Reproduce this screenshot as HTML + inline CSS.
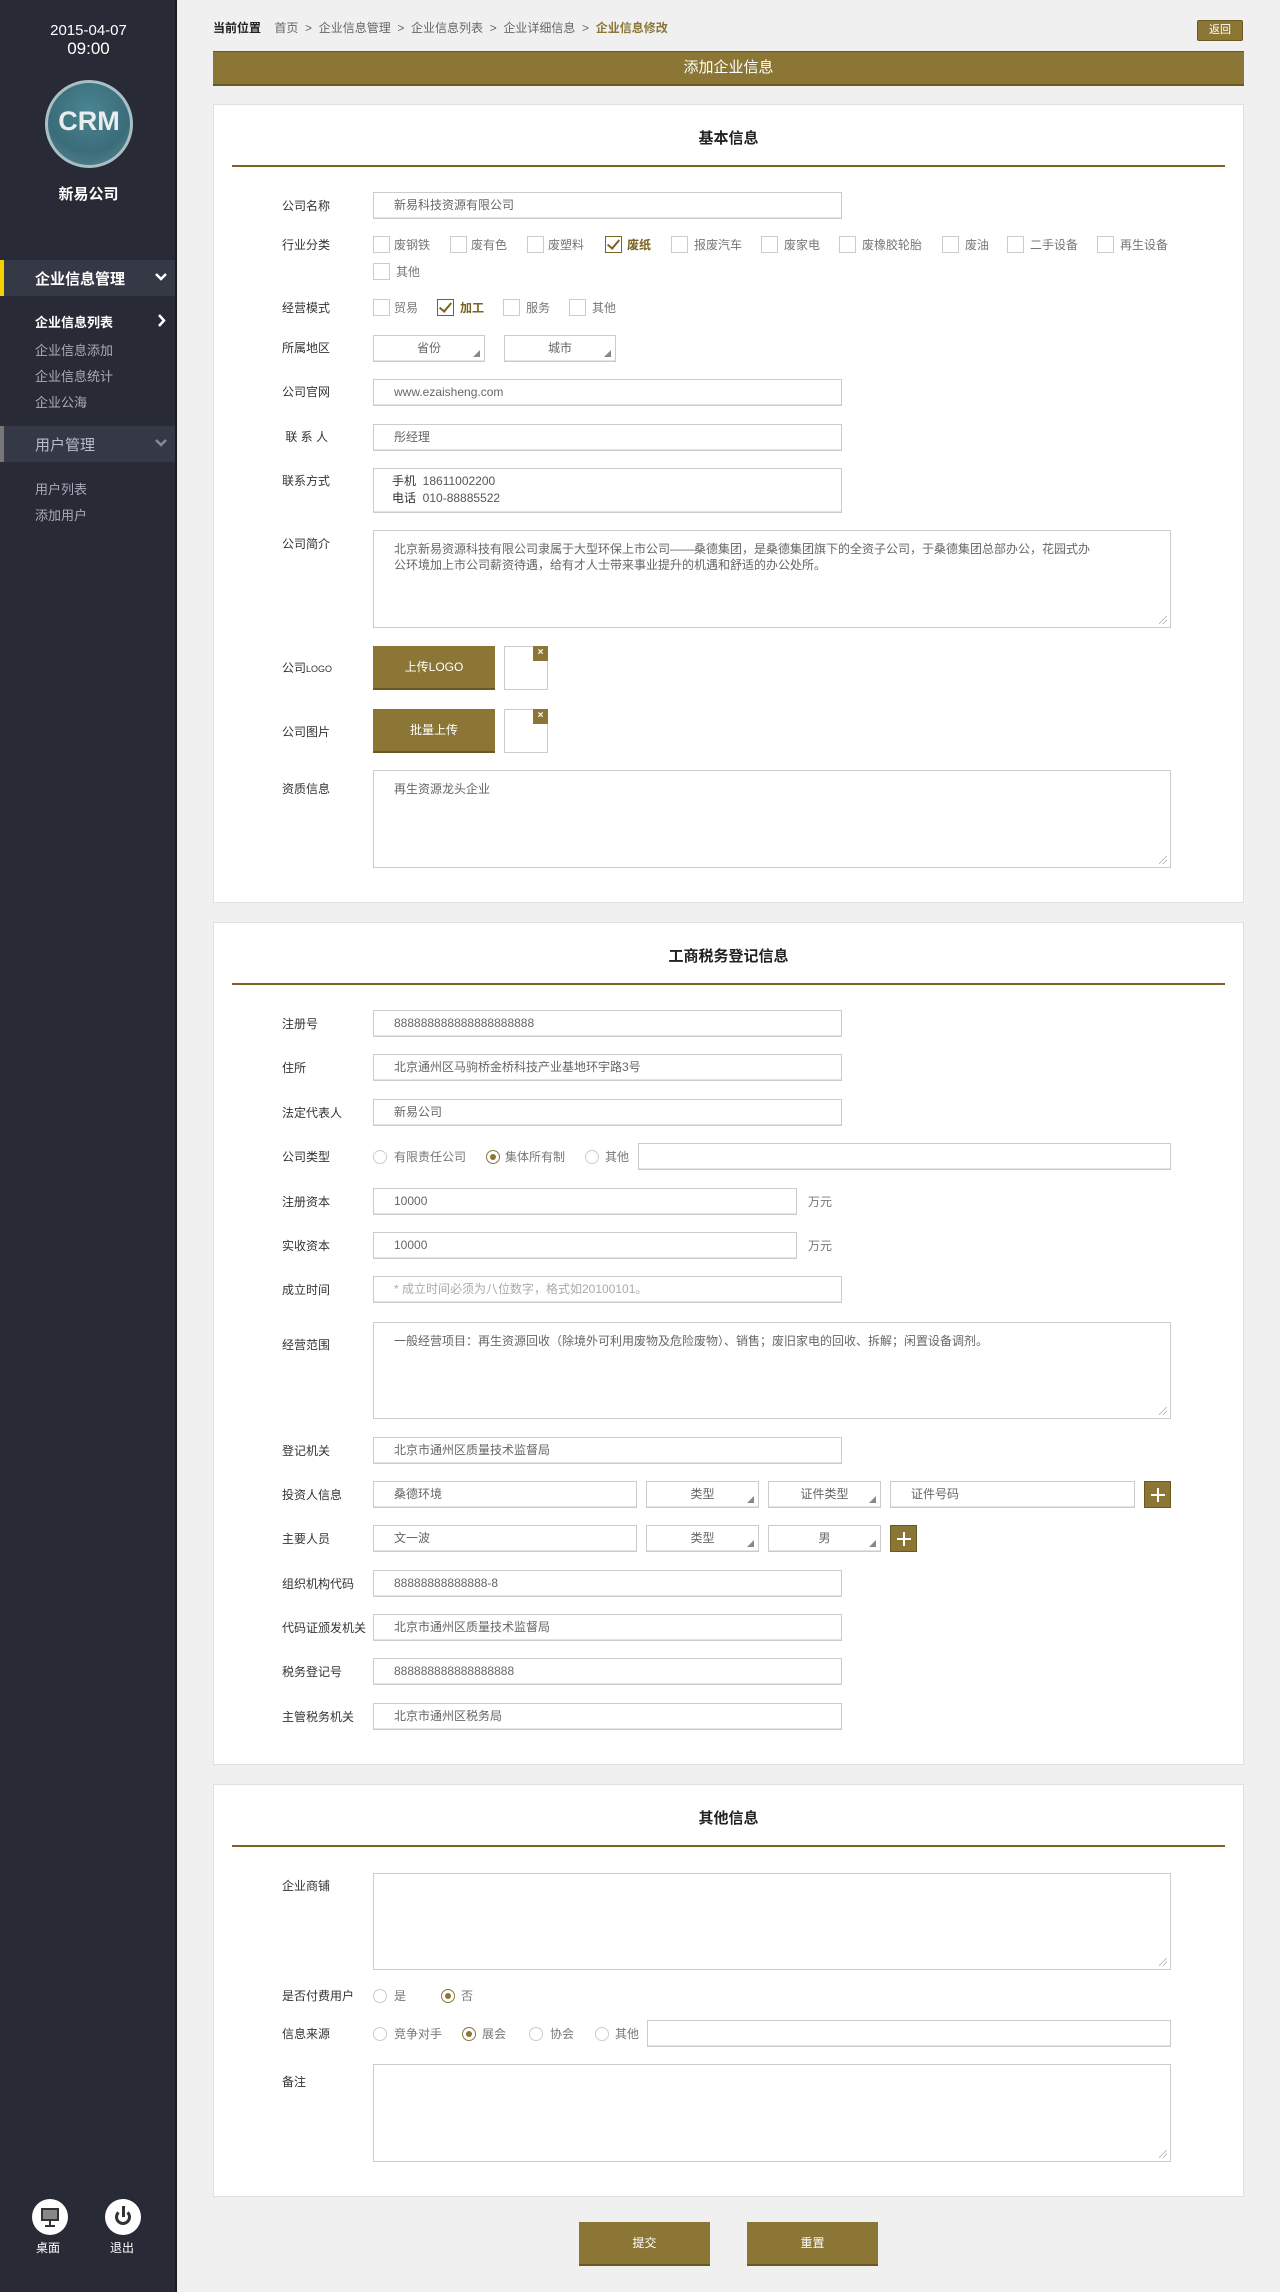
<!DOCTYPE html>
<html><head><meta charset="utf-8"><style>
*{margin:0;padding:0;box-sizing:border-box}
body{width:1280px;height:2292px;background:#f0f0f0;position:relative;font-family:"Liberation Sans","Noto Sans CJK SC",sans-serif;font-size:13px;color:#333;overflow:hidden}
.a{position:absolute;white-space:nowrap}
#sb{position:absolute;left:0;top:0;width:177px;height:2292px;background:#282a35;border-right:2px solid #1c1d24}
.card{position:absolute;left:213px;width:1031px;background:#fff;border:1px solid #e0e0e0}
.hd{position:absolute;left:0;width:100%;text-align:center;font-size:15px;color:#222;font-weight:bold}
.ln{position:absolute;left:18px;width:993px;height:2px;background:#7a6320}
.lb{position:absolute;left:282px;font-size:12px;color:#333;line-height:16px}
.in{position:absolute;height:27px;border:1px solid #ccc;box-shadow:inset 0 -1px 0 #e4e4e4;font-size:12px;color:#666;line-height:25px;padding-left:20px;white-space:nowrap;background:#fff}
.ta{position:absolute;left:373px;width:798px;border:1px solid #ccc;font-size:12px;color:#666;padding:10px 20px;line-height:16px;background:#fff}
.ta:after{content:"";position:absolute;right:3px;bottom:3px;width:8px;height:8px;background:linear-gradient(135deg,transparent 45%,#aaa 45%,#aaa 52%,transparent 52%,transparent 70%,#aaa 70%,#aaa 77%,transparent 77%)}
.sel{text-align:center;padding-left:0}
.sel:after{content:"";position:absolute;right:4px;bottom:4px;border-left:7px solid transparent;border-bottom:7px solid #888}
.cb{position:absolute;width:17px;height:17px;border:1px solid #ccc;background:#fff}
.cb.on{border-color:#7a6320}
.cb.on:after{content:"";position:absolute;left:4px;top:0px;width:5px;height:10px;border:solid #7a6320;border-width:0 2px 2px 0;transform:rotate(40deg)}
.ct{position:absolute;font-size:12px;color:#777;line-height:16px}
.ct.on{color:#7a6320;font-weight:bold}
.rd{position:absolute;width:14px;height:14px;border:1px solid #ccc;border-radius:50%;background:#fff}
.rd.on{border-color:#8b7636}
.rd.on:after{content:"";position:absolute;left:3px;top:3px;width:6px;height:6px;border-radius:50%;background:#8b7636}
.btn{position:absolute;background:#8b7636;border-bottom:2px solid #6b5a20;color:#fff;font-size:12px;text-align:center}
.plus{position:absolute;width:27px;height:27px;background:#8b7636;border:1px solid #6b5a20}
.plus:before{content:"";position:absolute;left:6px;top:12px;width:14px;height:2px;background:#fff}
.plus:after{content:"";position:absolute;left:12px;top:6px;width:2px;height:14px;background:#fff}
.thumb{position:absolute;left:504px;width:44px;height:44px;border:1px solid #ccc;background:#fff}
.thumb b{position:absolute;right:-1px;top:-1px;width:15px;height:15px;background:#8b7636;color:#fff;font-size:10px;line-height:14px;text-align:center}
.sm{font-size:12px;color:#aaa}
</style></head><body>
<div id="sb">
<div class="a" style="left:0;width:177px;text-align:center;top:22px;font-size:15px;color:#fff">2015-04-07</div>
<div class="a" style="left:0;width:177px;text-align:center;top:39px;font-size:17px;color:#fff">09:00</div>
<div class="a" style="left:45px;top:80px;width:88px;height:88px;border-radius:50%;background:radial-gradient(circle at 50% 35%,#4a8591,#3b6c7a 60%,#5b8a8e);border:3px solid #a8c0c4"></div>
<div class="a" style="left:45px;top:106px;width:88px;text-align:center;font-size:27px;font-weight:bold;color:#e8eef0">CRM</div>
<div class="a" style="left:0;width:177px;text-align:center;top:183px;font-size:15px;font-weight:bold;color:#fff">新易公司</div>
<div class="a" style="left:0;top:260px;width:175px;height:36px;background:#353845;border-left:4px solid #f5d000"></div>
<div class="a" style="left:35px;top:268px;font-size:15px;color:#fff;font-weight:bold">企业信息管理</div>
<svg class="a" style="left:155px;top:272px" width="12" height="10" viewBox="0 0 12 10"><path d="M1 2 L6 7 L11 2" stroke="#fff" stroke-width="2.5" fill="none"/></svg>
<div class="a" style="left:35px;top:312px;font-size:13px;color:#fff;font-weight:bold">企业信息列表</div>
<svg class="a" style="left:157px;top:314px" width="9" height="13" viewBox="0 0 9 13"><path d="M2 1 L7 6.5 L2 12" stroke="#fff" stroke-width="2.5" fill="none"/></svg>
<div class="a" style="left:35px;top:340px;font-size:13px;color:#aab">企业信息添加</div>
<div class="a" style="left:35px;top:366px;font-size:13px;color:#aab">企业信息统计</div>
<div class="a" style="left:35px;top:392px;font-size:13px;color:#aab">企业公海</div>
<div class="a" style="left:0;top:426px;width:175px;height:36px;background:#353845;border-left:4px solid #777"></div>
<div class="a" style="left:35px;top:434px;font-size:15px;color:#bbc">用户管理</div>
<svg class="a" style="left:155px;top:438px" width="12" height="10" viewBox="0 0 12 10"><path d="M1 2 L6 7 L11 2" stroke="#889" stroke-width="2.5" fill="none"/></svg>
<div class="a" style="left:35px;top:479px;font-size:13px;color:#aab">用户列表</div>
<div class="a" style="left:35px;top:505px;font-size:13px;color:#aab">添加用户</div>
<div class="a" style="left:32px;top:2199px;width:36px;height:36px;border-radius:50%;background:#fff"><div style="position:absolute;left:9px;top:9px;width:18px;height:13px;border:2px solid #333;background:#888"></div><div style="position:absolute;left:17px;top:22px;width:2px;height:5px;background:#333"></div><div style="position:absolute;left:13px;top:26px;width:10px;height:2px;background:#333"></div></div>
<div class="a" style="left:105px;top:2199px;width:36px;height:36px;border-radius:50%;background:#fff"><div style="position:absolute;left:10px;top:10px;width:16px;height:16px;border:3px solid #333;border-top-color:transparent;border-radius:50%"></div><div style="position:absolute;left:16.5px;top:7px;width:3px;height:11px;background:#333"></div></div>
<div class="a" style="left:36px;top:2239px;font-size:12px;color:#fff">桌面</div>
<div class="a" style="left:110px;top:2239px;font-size:12px;color:#fff">退出</div>
</div>

<div class="a" style="left:213px;top:19px;font-size:12px;color:#666"><b style="color:#222">当前位置</b>&nbsp;&nbsp;&nbsp; 首页 &nbsp;&gt;&nbsp; 企业信息管理 &nbsp;&gt;&nbsp; 企业信息列表 &nbsp;&gt;&nbsp; 企业详细信息 &nbsp;&gt;&nbsp; <b style="color:#8b7636">企业信息修改</b></div>
<div class="btn" style="left:1197px;top:20px;width:46px;height:21px;font-size:11px;line-height:19px;border-radius:2px;border:1px solid #6b5a20">返回</div>
<div class="a" style="left:213px;top:51px;width:1031px;height:35px;background:#8b7636;border-bottom:2px solid #6b5a20;border-top:1px solid #6b5a20;color:#fff;font-size:15px;text-align:center;line-height:32px">添加企业信息</div>

<div class="card" style="top:104px;height:799px"><div class="hd" style="top:22px">基本信息</div><div class="ln" style="top:60px"></div></div>
<div class="lb" style="top:198px">公司名称</div><div class="in" style="left:373px;top:192px;width:469px">新易科技资源有限公司</div>
<div class="lb" style="top:237px">行业分类</div>
<div class="cb" style="left:373px;top:236px"></div><div class="ct" style="left:394px;top:237px">废钢铁</div>
<div class="cb" style="left:450px;top:236px"></div><div class="ct" style="left:471px;top:237px">废有色</div>
<div class="cb" style="left:527px;top:236px"></div><div class="ct" style="left:548px;top:237px">废塑料</div>
<div class="cb on" style="left:605px;top:236px"></div><div class="ct on" style="left:627px;top:237px">废纸</div>
<div class="cb" style="left:671px;top:236px"></div><div class="ct" style="left:694px;top:237px">报废汽车</div>
<div class="cb" style="left:761px;top:236px"></div><div class="ct" style="left:784px;top:237px">废家电</div>
<div class="cb" style="left:839px;top:236px"></div><div class="ct" style="left:862px;top:237px">废橡胶轮胎</div>
<div class="cb" style="left:942px;top:236px"></div><div class="ct" style="left:965px;top:237px">废油</div>
<div class="cb" style="left:1007px;top:236px"></div><div class="ct" style="left:1030px;top:237px">二手设备</div>
<div class="cb" style="left:1097px;top:236px"></div><div class="ct" style="left:1120px;top:237px">再生设备</div>
<div class="cb" style="left:373px;top:263px"></div><div class="ct" style="left:396px;top:264px">其他</div>
<div class="lb" style="top:300px">经营模式</div>
<div class="cb" style="left:373px;top:299px"></div><div class="ct" style="left:394px;top:300px">贸易</div>
<div class="cb on" style="left:437px;top:299px"></div><div class="ct on" style="left:460px;top:300px">加工</div>
<div class="cb" style="left:503px;top:299px"></div><div class="ct" style="left:526px;top:300px">服务</div>
<div class="cb" style="left:569px;top:299px"></div><div class="ct" style="left:592px;top:300px">其他</div>
<div class="lb" style="top:340px">所属地区</div>
<div class="in sel" style="left:373px;top:335px;width:112px">省份</div>
<div class="in sel" style="left:504px;top:335px;width:112px">城市</div>
<div class="lb" style="top:384px">公司官网</div><div class="in" style="left:373px;top:379px;width:469px">www.ezaisheng.com</div>
<div class="lb" style="top:429px">&nbsp;联 系 人</div><div class="in" style="left:373px;top:424px;width:469px">彤经理</div>
<div class="lb" style="top:473px">联系方式</div>
<div class="in" style="left:373px;top:468px;width:469px;height:45px;line-height:17px;padding:4px 18px;color:#555"><b style="color:#333;font-weight:normal">手机</b>&nbsp; 18611002200<br><b style="color:#333;font-weight:normal">电话</b>&nbsp; 010-88885522</div>
<div class="lb" style="top:536px">公司简介</div>
<div class="ta" style="top:530px;height:98px">北京新易资源科技有限公司隶属于大型环保上市公司——桑德集团，是桑德集团旗下的全资子公司，于桑德集团总部办公，花园式办<br>公环境加上市公司薪资待遇，给有才人士带来事业提升的机遇和舒适的办公处所。</div>
<div class="lb" style="top:660px">公司<span style="font-size:9px">LOGO</span></div>
<div class="btn" style="left:373px;top:646px;width:122px;height:44px;line-height:42px">上传LOGO</div>
<div class="thumb" style="top:646px"><b>×</b></div>
<div class="lb" style="top:724px">公司图片</div>
<div class="btn" style="left:373px;top:709px;width:122px;height:44px;line-height:42px">批量上传</div>
<div class="thumb" style="top:709px"><b>×</b></div>
<div class="lb" style="top:781px">资质信息</div>
<div class="ta" style="top:770px;height:98px">再生资源龙头企业</div>

<div class="card" style="top:922px;height:843px"><div class="hd" style="top:22px">工商税务登记信息</div><div class="ln" style="top:60px"></div></div>
<div class="lb" style="top:1016px">注册号</div><div class="in" style="left:373px;top:1010px;width:469px">888888888888888888888</div>
<div class="lb" style="top:1060px">住所</div><div class="in" style="left:373px;top:1054px;width:469px">北京通州区马驹桥金桥科技产业基地环宇路3号</div>
<div class="lb" style="top:1105px">法定代表人</div><div class="in" style="left:373px;top:1099px;width:469px">新易公司</div>
<div class="lb" style="top:1149px">公司类型</div>
<div class="rd" style="left:373px;top:1150px"></div><div class="ct" style="left:394px;top:1149px">有限责任公司</div>
<div class="rd on" style="left:486px;top:1150px"></div><div class="ct" style="left:505px;top:1149px">集体所有制</div>
<div class="rd" style="left:585px;top:1150px"></div><div class="ct" style="left:605px;top:1149px">其他</div>
<div class="in" style="left:638px;top:1143px;width:533px"></div>
<div class="lb" style="top:1194px">注册资本</div><div class="in" style="left:373px;top:1188px;width:424px">10000</div><div class="ct" style="left:808px;top:1194px">万元</div>
<div class="lb" style="top:1238px">实收资本</div><div class="in" style="left:373px;top:1232px;width:424px">10000</div><div class="ct" style="left:808px;top:1238px">万元</div>
<div class="lb" style="top:1282px">成立时间</div><div class="in sm" style="left:373px;top:1276px;width:469px;color:#aaa">* 成立时间必须为八位数字，格式如20100101。</div>
<div class="lb" style="top:1337px">经营范围</div>
<div class="ta" style="top:1322px;height:97px">一般经营项目：再生资源回收（除境外可利用废物及危险废物）、销售；废旧家电的回收、拆解；闲置设备调剂。</div>
<div class="lb" style="top:1443px">登记机关</div><div class="in" style="left:373px;top:1437px;width:469px">北京市通州区质量技术监督局</div>
<div class="lb" style="top:1487px">投资人信息</div>
<div class="in" style="left:373px;top:1481px;width:264px">桑德环境</div>
<div class="in sel" style="left:646px;top:1481px;width:113px">类型</div>
<div class="in sel" style="left:768px;top:1481px;width:113px">证件类型</div>
<div class="in" style="left:890px;top:1481px;width:245px">证件号码</div>
<div class="plus" style="left:1144px;top:1481px"></div>
<div class="lb" style="top:1531px">主要人员</div>
<div class="in" style="left:373px;top:1525px;width:264px">文一波</div>
<div class="in sel" style="left:646px;top:1525px;width:113px">类型</div>
<div class="in sel" style="left:768px;top:1525px;width:113px">男</div>
<div class="plus" style="left:890px;top:1525px"></div>
<div class="lb" style="top:1576px">组织机构代码</div><div class="in" style="left:373px;top:1570px;width:469px">88888888888888-8</div>
<div class="lb" style="top:1620px">代码证颁发机关</div><div class="in" style="left:373px;top:1614px;width:469px">北京市通州区质量技术监督局</div>
<div class="lb" style="top:1664px">税务登记号</div><div class="in" style="left:373px;top:1658px;width:469px">888888888888888888</div>
<div class="lb" style="top:1709px">主管税务机关</div><div class="in" style="left:373px;top:1703px;width:469px">北京市通州区税务局</div>

<div class="card" style="top:1784px;height:413px"><div class="hd" style="top:22px">其他信息</div><div class="ln" style="top:60px"></div></div>
<div class="lb" style="top:1878px">企业商铺</div><div class="ta" style="top:1873px;height:97px"></div>
<div class="lb" style="top:1988px">是否付费用户</div>
<div class="rd" style="left:373px;top:1989px"></div><div class="ct" style="left:394px;top:1988px">是</div>
<div class="rd on" style="left:441px;top:1989px"></div><div class="ct" style="left:461px;top:1988px">否</div>
<div class="lb" style="top:2026px">信息来源</div>
<div class="rd" style="left:373px;top:2027px"></div><div class="ct" style="left:394px;top:2026px">竞争对手</div>
<div class="rd on" style="left:462px;top:2027px"></div><div class="ct" style="left:482px;top:2026px">展会</div>
<div class="rd" style="left:529px;top:2027px"></div><div class="ct" style="left:550px;top:2026px">协会</div>
<div class="rd" style="left:595px;top:2027px"></div><div class="ct" style="left:615px;top:2026px">其他</div>
<div class="in" style="left:647px;top:2020px;width:524px"></div>
<div class="lb" style="top:2074px">备注</div><div class="ta" style="top:2064px;height:98px"></div>

<div class="btn" style="left:579px;top:2222px;width:131px;height:44px;line-height:42px">提交</div>
<div class="btn" style="left:747px;top:2222px;width:131px;height:44px;line-height:42px">重置</div>
</body></html>
